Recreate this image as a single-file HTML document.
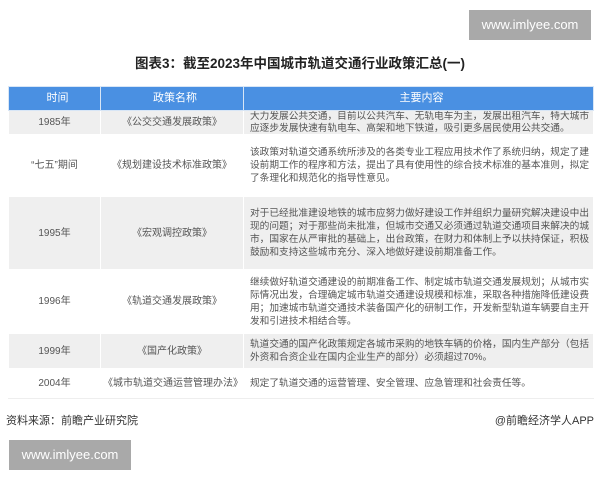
<!DOCTYPE html>
<html><head><meta charset="utf-8"><style>
body{margin:0;width:600px;height:480px;background:#fff;font-family:"Liberation Sans","Noto Sans CJK SC",sans-serif;position:relative;overflow:hidden;color:#555}
.wm{position:absolute;background:#a9a9a9;color:#fff;font-size:13px;line-height:30px;text-align:center;width:122px}
.title{position:absolute;top:52px;left:0;width:600px;text-align:center;font-size:13.5px;font-weight:bold;color:#222}
table{position:absolute;left:8px;top:86px;width:586px;border-collapse:collapse;font-size:9.7px;table-layout:fixed}
td,th{border:1px solid #fff;padding:0 0 0 6px;line-height:13px;overflow:hidden;white-space:nowrap}
th{background:#4a90e2;color:#fff;font-weight:normal;font-size:11px;height:23px;border-color:#d8e6f6}
td.c{text-align:center;font-size:10px;padding:0 2px}
tr.g td{background:#efefef}
td{color:#555}
.src{position:absolute;top:412px;font-size:11px;color:#333}
</style></head><body>
<div class="wm" style="left:469px;top:10px">www.imlyee.com</div>
<div class="title">图表3：截至2023年中国城市轨道交通行业政策汇总(一)</div>
<table>
<colgroup><col style="width:92px"><col style="width:143px"><col></colgroup>
<tr><th>时间</th><th>政策名称</th><th>主要内容</th></tr>
<tr class="g" style="height:24px"><td class="c">1985年</td><td class="c">《公交交通发展政策》</td><td style="line-height:11.5px">大力发展公共交通，目前以公共汽车、无轨电车为主，发展出租汽车，特大城市<br>应逐步发展快速有轨电车、高架和地下铁道，吸引更多居民使用公共交通。</td></tr>
<tr style="height:62px"><td class="c">“七五”期间</td><td class="c">《规划建设技术标准政策》</td><td>该政策对轨道交通系统所涉及的各类专业工程应用技术作了系统归纳，规定了建<br>设前期工作的程序和方法，提出了具有使用性的综合技术标准的基本准则，拟定<br>了条理化和规范化的指导性意见。</td></tr>
<tr class="g" style="height:73px"><td class="c">1995年</td><td class="c">《宏观调控政策》</td><td>对于已经批准建设地铁的城市应努力做好建设工作并组织力量研究解决建设中出<br>现的问题；对于那些尚未批准，但城市交通又必须通过轨道交通项目来解决的城<br>市，国家在从严审批的基础上，出台政策，在财力和体制上予以扶持保证，积极<br>鼓励和支持这些城市充分、深入地做好建设前期准备工作。</td></tr>
<tr style="height:64px"><td class="c">1996年</td><td class="c">《轨道交通发展政策》</td><td>继续做好轨道交通建设的前期准备工作、制定城市轨道交通发展规划；从城市实<br>际情况出发，合理确定城市轨道交通建设规模和标准，采取各种措施降低建设费<br>用；加速城市轨道交通技术装备国产化的研制工作，开发新型轨道车辆要自主开<br>发和引进技术相结合等。</td></tr>
<tr class="g" style="height:35px"><td class="c">1999年</td><td class="c">《国产化政策》</td><td>轨道交通的国产化政策规定各城市采购的地铁车辆的价格，国内生产部分（包括<br>外资和合资企业在国内企业生产的部分）必须超过70%。</td></tr>
<tr style="height:30px"><td class="c" style="border-bottom:1px solid #eee">2004年</td><td class="c" style="border-bottom:1px solid #eee">《城市轨道交通运营管理办法》</td><td style="border-bottom:1px solid #eee">规定了轨道交通的运营管理、安全管理、应急管理和社会责任等。</td></tr>
</table>
<div class="src" style="left:6px">资料来源：前瞻产业研究院</div>
<div class="src" style="right:6px">@前瞻经济学人APP</div>
<div class="wm" style="left:9px;top:440px">www.imlyee.com</div>
</body></html>
